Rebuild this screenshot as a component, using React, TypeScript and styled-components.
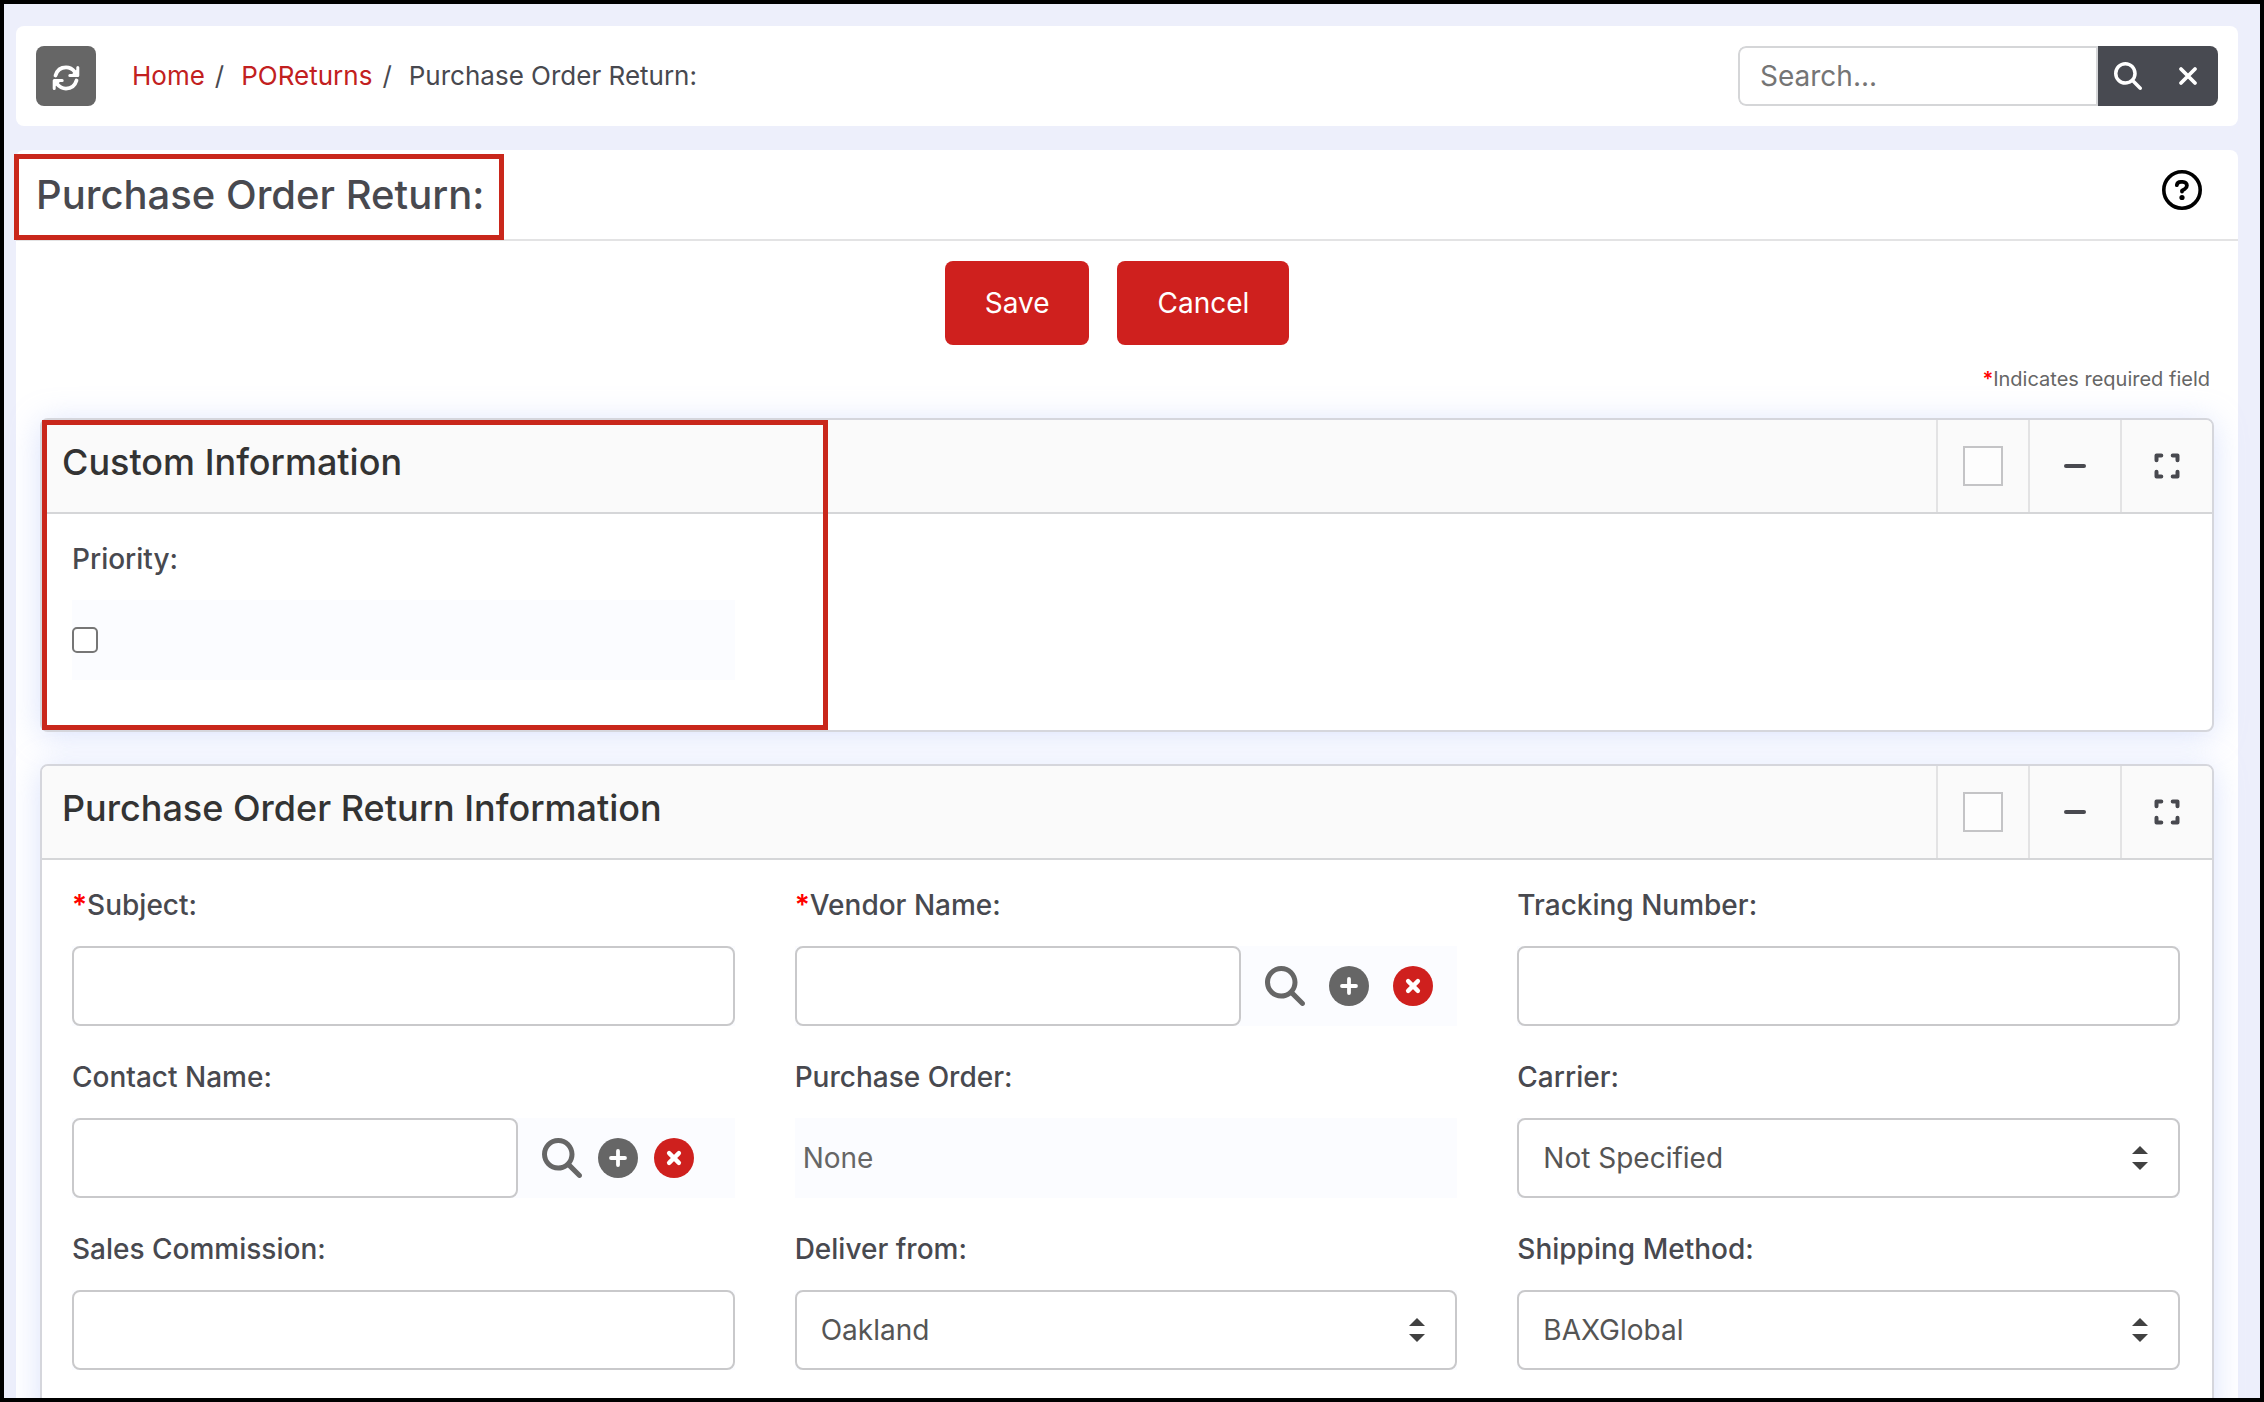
import React, { useId } from "react";
import styled, { createGlobalStyle, css } from "styled-components";
import { FaMagnifyingGlass } from "react-icons/fa6";

const GlobalStyle = createGlobalStyle`
  *, *::before, *::after { box-sizing: border-box; }
  body {
    margin: 0;
    background: #000;
    color: #48494f;
    font-family: Inter, "Liberation Sans", sans-serif;
    font-size: 28px;
    line-height: 36px;
  }
  button, input, select { font: inherit; color: inherit; margin: 0; }
  button { border: 0; padding: 0; cursor: pointer; background: none; }
`;

const Frame = styled.div`
  display: flex;
  flex-direction: column;
  gap: 24px;
  height: 100vh;
  overflow: hidden;
  padding: 22px 22px 0 12px;
  border: 4px solid #000;
  background: #edeffb;
`;

const TopBar = styled.header`
  display: flex;
  align-items: center;
  flex: none;
  gap: 36px;
  padding: 20px;
  border-radius: 8px;
  background: #fff;
`;

const RefreshButton = styled.button`
  display: grid;
  place-items: center;
  width: 60px;
  height: 60px;
  padding-top: 4px;
  border-radius: 8px;
  background: #666;
  color: #fff;
`;

const Crumbs = styled.ol`
  display: flex;
  flex: 1;
  margin: 0;
  padding: 0;
  list-style: none;
  font-size: 26px;

  li + li::before {
    content: "/";
    padding: 0 17px 0 10px;
  }

  a { color: #c22020; text-decoration: none; }
`;

const SearchForm = styled.form`
  display: flex;
  height: 60px;
  border-radius: 8px;
  overflow: hidden;
`;

const SearchInput = styled.input`
  width: 360px;
  padding: 0 20px;
  border: 2px solid #d5d6d8;
  border-radius: 8px 0 0 8px;
  background: #fff;
  outline: none;

  &::placeholder { color: #757575; opacity: 1; }
`;

const SearchAction = styled.button`
  display: grid;
  place-items: center;
  width: 60px;
  background: #484a51;
  color: #fff;
`;

const Card = styled.main`
  position: relative;
  flex: none;
  padding-bottom: 24px;
  border-radius: 8px 8px 0 0;
  background: #fff;
`;

const TitleRow = styled.div`
  display: flex;
  align-items: center;
  justify-content: space-between;
  height: 91px;
  padding: 0 36px 0 20px;
  border-bottom: 2px solid #e3e3e4;
`;

const PageTitle = styled.h1`
  margin: 0;
  font-size: 40px;
  line-height: 48px;
  font-weight: 500;
`;

const HelpButton = styled.button`
  display: grid;
  place-items: center;
  width: 40px;
  height: 40px;
  margin-bottom: 10px;
  color: #000;
`;

const Actions = styled.div`
  display: flex;
  justify-content: center;
  gap: 28px;
  padding: 20px 20px 20px 0;
`;

const ActionButton = styled.button`
  height: 84px;
  padding: 0 40px;
  border-radius: 8px;
  background: #cf201e;
  color: #fff;
`;

const RequiredNote = styled.p`
  margin: 0;
  padding-right: 28px;
  color: #666;
  font-size: 20px;
  line-height: 28px;
  text-align: right;
`;

const Star = styled.span`
  color: #f00;
  font-weight: 600;
`;

const Panels = styled.div`
  display: flex;
  flex-direction: column;
  gap: 32px;
  padding: 25px 24px 0;
`;

const PanelBox = styled.section`
  position: relative;
  border: 2px solid #d5d6dc;
  border-radius: 8px;
  background: #fff;
  box-shadow: 0 4px 32px rgba(150, 172, 245, 0.35);
`;

const PanelHeader = styled.div`
  display: flex;
  height: 94px;
  border-bottom: 2px solid #d5d6d8;
  border-radius: 6px 6px 0 0;
  background: #fafafa;
`;

const PanelTitle = styled.h2`
  flex: 1;
  margin: 0;
  padding: 20px;
  color: #333;
  font-size: 36px;
  line-height: 44px;
  font-weight: 500;
`;

const Tool = styled.div`
  display: grid;
  place-items: center;
  width: 92px;
  border-left: 2px solid #e3e3e4;
`;

const ToolButton = styled.button`
  display: grid;
  place-items: center;
  width: 60px;
  height: 60px;
`;

const ToolCheck = styled.input`
  appearance: none;
  width: 40px;
  height: 40px;
  border: 2px solid #c4c4c6;
  background: #fdfdfd;
`;

const FieldGrid = styled.div`
  display: grid;
  grid-template-columns: repeat(3, minmax(0, 1fr));
  column-gap: 60px;
  row-gap: 33px;
  padding: 27px 32px 50px 30px;
`;

const Field = styled.div`
  display: flex;
  flex-direction: column;
  gap: 23px;
`;

const Label = styled.label`
  font-weight: 500;
  line-height: 36px;
`;

const ControlBox = styled.div`
  display: flex;
  align-items: center;
  height: 80px;
  background: #fbfcff;
`;

const controlFrame = css`
  height: 80px;
  border: 2px solid #c9c9cb;
  border-radius: 8px;
  background: #fff;
  outline: none;
`;

const TextInput = styled.input<{ $narrow?: boolean }>`
  ${controlFrame}
  width: ${(p) => (p.$narrow ? "446px" : "100%")};
  padding: 0 24px;
`;

const SelectWrap = styled.div`
  position: relative;
  width: 100%;
`;

const Select = styled.select`
  ${controlFrame}
  appearance: none;
  width: 100%;
  padding: 0 60px 0 24px;
  color: #555;
`;

const SelectArrows = styled.svg`
  position: absolute;
  top: 28px;
  right: 32px;
  pointer-events: none;
`;

const Checkbox = styled.input`
  appearance: none;
  width: 26px;
  height: 26px;
  border: 2px solid #767676;
  border-radius: 5px;
  background: #fff;
`;

const PlainValue = styled.output`
  padding-left: 8px;
  color: #666;
`;

const LookupTools = styled.div<{ $gap: number }>`
  display: flex;
  gap: ${(p) => p.$gap}px;
  padding-left: 24px;
`;

const RoundButton = styled.button<{ $bg?: string }>`
  display: grid;
  place-items: center;
  width: 40px;
  height: 40px;
  border-radius: 50%;
  background: ${(p) => p.$bg ?? "transparent"};
  color: ${(p) => (p.$bg ? "#fff" : "#666")};
`;

const TitleHighlight = styled.div`
  position: absolute;
  top: 4px;
  left: -2px;
  width: 490px;
  height: 86px;
  border: 5px solid #c9271b;
  pointer-events: none;
`;

const PanelHighlight = styled.div`
  position: absolute;
  inset: 0 auto 0 0;
  width: 786px;
  border: 5px solid #c9271b;
  pointer-events: none;
`;

const Refresh = () => (
  <svg width="28" height="26" viewBox="0 0 28 26" fill="none" stroke="currentColor" strokeWidth="3.8" strokeLinecap="round" strokeLinejoin="round">
    <path d="M3.500 10.500C5 5.500 9 2.400 14 2.400c3.600 0 6.600 1.600 8.800 4.400" />
    <path d="M24.500 15.500C23 20.500 19 23.600 14 23.600c-3.600 0-6.600-1.600-8.800-4.400" />
    <path d="M25.800 2.400v8h-8M2.200 23.600v-8h8" strokeWidth="3" />
    <path d="M25 4.500V10h-6zM3 21.500V16h6z" fill="currentColor" stroke="none" />
  </svg>
);

const Cross = ({ size, weight }: { size: number; weight: number }) => (
  <svg width={size} height={size} viewBox="0 0 20 20" overflow="visible" fill="none" stroke="currentColor" strokeWidth={weight} strokeLinecap="round">
    <path d="M3 3 17 17M17 3 3 17" />
  </svg>
);

const Plus = () => (
  <svg width="20" height="20" viewBox="0 0 20 20" fill="none" stroke="currentColor" strokeWidth="3.8" strokeLinecap="round">
    <path d="M10 3v14M3 10h14" />
  </svg>
);

const Help = () => (
  <svg width="40" height="40" viewBox="0 0 40 40" fill="none" stroke="currentColor" strokeLinecap="round" strokeLinejoin="round">
    <circle cx="20" cy="20" r="18.2" strokeWidth="3.6" />
    <path d="M14.8 15.2c.3-2.2 1.8-3.4 4-3.4h2c2.400 0 4.100 1.500 4.100 3.700 0 1.700-.8 2.700-2.100 3.500l-2.800 1.700v.9" strokeWidth="3.800" />
    <circle cx="20" cy="27.500" r="2.600" fill="currentColor" stroke="none" />
  </svg>
);

const Expand = () => (
  <svg width="26" height="26" viewBox="0 0 26 26" fill="none" stroke="#48494f" strokeWidth="4" strokeLinecap="round" strokeLinejoin="round">
    <path d="M2.500 7.300V2.500H7.300M18.700 2.500h4.800V7.300M23.500 18.700v4.800h-4.800M7.300 23.500H2.500v-4.800" />
  </svg>
);

const Minus = () => (
  <svg width="24" height="4" viewBox="0 0 24 4" stroke="#48494f" strokeWidth="4" strokeLinecap="round">
    <path d="M3 2H21" />
  </svg>
);

function Panel({ title, children }: { title: string; children: React.ReactNode }) {
  return (
    <PanelBox aria-label={title}>
      <PanelHeader>
        <PanelTitle>{title}</PanelTitle>
        <Tool><ToolCheck type="checkbox" aria-label={`Select ${title}`} /></Tool>
        <Tool><ToolButton type="button" aria-label="Collapse"><Minus /></ToolButton></Tool>
        <Tool><ToolButton type="button" aria-label="Expand"><Expand /></ToolButton></Tool>
      </PanelHeader>
      {children}
    </PanelBox>
  );
}

type FieldSpec = {
  label: string;
  kind: "text" | "lookup" | "select" | "value" | "check";
  required?: boolean;
  value?: string;
  gap?: number;
};

function FormField({ label, kind, required, value, gap = 24 }: FieldSpec) {
  const id = useId();
  return (
    <Field>
      <Label htmlFor={id}>{required && <Star>*</Star>}{label}</Label>
      <ControlBox>
        {kind === "text" && <TextInput id={id} type="text" />}
        {kind === "check" && <Checkbox id={id} type="checkbox" />}
        {kind === "value" && <PlainValue id={id}>{value}</PlainValue>}
        {kind === "select" && (
          <SelectWrap>
            <Select id={id} defaultValue={value}><option>{value}</option></Select>
            <SelectArrows width="16" height="24" viewBox="0 0 16 24" fill="#414141">
              <path d="M8 0 16 8H0zM8 24 0 16h16z" />
            </SelectArrows>
          </SelectWrap>
        )}
        {kind === "lookup" && (
          <>
            <TextInput id={id} type="text" $narrow />
            <LookupTools $gap={gap}>
              <RoundButton type="button" aria-label="Find"><FaMagnifyingGlass size={40} /></RoundButton>
              <RoundButton type="button" aria-label="Add" $bg="#666"><Plus /></RoundButton>
              <RoundButton type="button" aria-label="Clear" $bg="#cf201e"><Cross size={14} weight={6.2} /></RoundButton>
            </LookupTools>
          </>
        )}
      </ControlBox>
    </Field>
  );
}

const returnFields: FieldSpec[] = [
  { label: "Subject:", kind: "text", required: true },
  { label: "Vendor Name:", kind: "lookup", required: true },
  { label: "Tracking Number:", kind: "text" },
  { label: "Contact Name:", kind: "lookup", gap: 16 },
  { label: "Purchase Order:", kind: "value", value: "None" },
  { label: "Carrier:", kind: "select", value: "Not Specified" },
  { label: "Sales Commission:", kind: "text" },
  { label: "Deliver from:", kind: "select", value: "Oakland" },
  { label: "Shipping Method:", kind: "select", value: "BAXGlobal" },
];

export default function App() {
  return (
    <>
      <GlobalStyle />
      <Frame>
        <TopBar>
          <RefreshButton type="button" aria-label="Refresh"><Refresh /></RefreshButton>
          <Crumbs>
            <li><a href="#home">Home</a></li>
            <li><a href="#returns">POReturns</a></li>
            <li>Purchase Order Return:</li>
          </Crumbs>
          <SearchForm onSubmit={(e) => e.preventDefault()}>
            <SearchInput type="text" placeholder="Search..." aria-label="Search" />
            <SearchAction type="submit" aria-label="Search"><FaMagnifyingGlass size={28} /></SearchAction>
            <SearchAction type="reset" aria-label="Clear search"><Cross size={20} weight={3.8} /></SearchAction>
          </SearchForm>
        </TopBar>
        <Card>
          <TitleRow>
            <PageTitle>Purchase Order Return:</PageTitle>
            <HelpButton type="button" aria-label="Help"><Help /></HelpButton>
          </TitleRow>
          <TitleHighlight />
          <Actions>
            <ActionButton type="button">Save</ActionButton>
            <ActionButton type="button">Cancel</ActionButton>
          </Actions>
          <RequiredNote><Star>*</Star>Indicates required field</RequiredNote>
          <Panels>
            <Panel title="Custom Information">
              <FieldGrid><FormField label="Priority:" kind="check" /></FieldGrid>
              <PanelHighlight />
            </Panel>
            <Panel title="Purchase Order Return Information">
              <FieldGrid>
                {returnFields.map((field) => <FormField key={field.label} {...field} />)}
              </FieldGrid>
            </Panel>
          </Panels>
        </Card>
      </Frame>
    </>
  );
}
